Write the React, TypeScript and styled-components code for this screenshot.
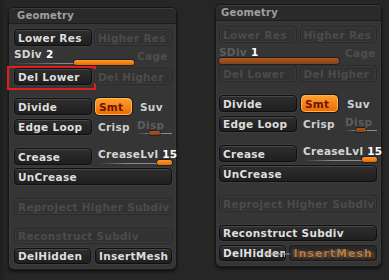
import React from 'react';
import styled, { createGlobalStyle, css } from 'styled-components';

const GlobalStyle = createGlobalStyle`
  html, body {
    margin: 0;
    background: #262626;
    font-family: "DejaVu Sans", "Liberation Sans", sans-serif;
  }
`;

type BtnKind = 'on' | 'off' | 'accent' | 'ghost';

const Stage = styled.div`
  display: flex;
  align-items: flex-start;
  gap: 38px;
  padding: 4px 0 0 8px;
  height: 280px;
  box-sizing: border-box;
  overflow: hidden;
  background: linear-gradient(90deg, #1e1e1e 0, #262626 6px);
`;

const Panel = styled.div<{ $drop: number; $width: number; $pad: number }>`
  margin-top: ${(p) => p.$drop}px;
  width: ${(p) => p.$width}px;
  height: 263px;
  box-sizing: border-box;
  background: #353535;
  border: 1px solid #171717;
  border-radius: 6px;
  box-shadow: 0 2px 3px rgba(0, 0, 0, 0.55), inset 0 0 0 1px #3a3a3a;
  display: flex;
  flex-direction: column;
  --pad: ${(p) => p.$pad}px;
`;

const Header = styled.div<{ $indent: number }>`
  height: 15px;
  flex: none;
  background: #2a2a2a;
  border-radius: 5px 5px 0 0;
  border-bottom: 1px solid #1d1d1d;
  box-shadow: inset 0 1px 0 #3c3c3c;
  padding-left: ${(p) => p.$indent}px;
  font-size: 10px;
  font-weight: bold;
  letter-spacing: 0.2px;
  line-height: 15px;
  color: #a0a0a0;
`;

const Body = styled.div`
  display: flex;
  flex-direction: column;
  gap: 13px;
  padding: 5px 4px 0 var(--pad);
`;

const Section = styled.div<{ $gap: number }>`
  display: flex;
  flex-direction: column;
  gap: ${(p) => p.$gap}px;
`;

const Pair = styled.div<{ $gap: number }>`
  display: grid;
  grid-template-columns: 1fr 1fr;
  gap: ${(p) => p.$gap}px;
`;

const Row = styled.div<{ $cols: string; $gap?: number }>`
  display: grid;
  grid-template-columns: ${(p) => p.$cols};
  column-gap: ${(p) => p.$gap ?? 0}px;
  align-items: center;
`;

const Btn = styled.div<{ $kind?: BtnKind; $h?: number }>`
  position: relative;
  height: ${(p) => p.$h ?? 17}px;
  box-sizing: border-box;
  border-radius: 4px;
  padding: 0 3px;
  display: flex;
  align-items: center;
  font-size: 10.5px;
  font-weight: bold;
  letter-spacing: 0.3px;
  white-space: nowrap;
  overflow: hidden;
  ${(p) =>
    p.$kind === 'off'
      ? css`
          background: #323232;
          border: 1px solid #2a2a2a;
          box-shadow: inset 0 0 0 1px #3b3b3b;
          color: #4b4b4b;
        `
      : p.$kind === 'accent'
      ? css`
          background: linear-gradient(#ff9d30, #ec6c00);
          border: 1px solid #ffb357;
          box-shadow: 0 0 0 1px #1a1a1a;
          color: #6a1300;
        `
      : p.$kind === 'ghost'
      ? css`
          overflow: visible;
          padding-left: 4px;
          background: rgba(30, 30, 30, 0.5);
          border: 1px solid rgba(15, 15, 15, 0.6);
          box-shadow: 0 0 0 1px rgba(70, 70, 70, 0.5);
          color: rgba(200, 140, 80, 0.8);
          letter-spacing: 1.3px;
          filter: blur(0.6px);
          text-shadow: 3px 1px 2px rgba(130, 75, 30, 0.9), -2px 0 2px rgba(90, 90, 90, 0.8);
          &::before {
            content: '';
            position: absolute;
            left: -26px;
            top: 7px;
            width: 26px;
            height: 2px;
            background: rgba(150, 150, 150, 0.5);
          }
        `
      : css`
          background: linear-gradient(#2e2e2e, #1f1f1f);
          border: 1px solid #0f0f0f;
          box-shadow: inset 0 1px 0 #474747, 0 0 0 1px #3d3d3d;
          color: #dedede;
        `}
`;

const Highlight = styled.div`
  position: relative;
  &::after {
    content: '';
    position: absolute;
    top: -2px;
    left: -7px;
    right: -4px;
    bottom: -5px;
    border: 2px solid #e0201c;
    pointer-events: none;
  }
`;

const Label = styled.span<{ $dim?: boolean; $indent?: number }>`
  padding-left: ${(p) => p.$indent ?? 0}px;
  font-size: 10.5px;
  font-weight: bold;
  letter-spacing: 0.3px;
  white-space: nowrap;
  color: ${(p) => (p.$dim ? '#4e4e4e' : '#cfcfcf')};
`;

const CageLabel = styled(Label)`
  align-self: center;
  padding-bottom: 2px;
`;

const Value = styled.span<{ $dim?: boolean }>`
  color: ${(p) => (p.$dim ? '#5a5a5a' : '#ffffff')};
`;

const SubRow = styled.div`
  display: grid;
  grid-template-columns: 120px 1fr;
  height: 22px;
`;

const Slider = styled.div<{ $indent?: number }>`
  display: flex;
  flex-direction: column;
  padding-left: ${(p) => p.$indent ?? 0}px;
  min-width: 0;
`;

const SliderText = styled.div<{ $dim?: boolean; $top: number }>`
  padding-top: ${(p) => p.$top}px;
  height: 12px;
  line-height: 12px;
  font-size: 10.5px;
  font-weight: bold;
  letter-spacing: 0.3px;
  white-space: nowrap;
  color: ${(p) => (p.$dim ? '#5c5c5c' : '#d6d6d6')};
`;

const Track = styled.div<{ $h: number }>`
  position: relative;
  height: ${(p) => p.$h}px;
  &::before {
    content: '';
    position: absolute;
    left: 0;
    right: 0;
    top: 50%;
    height: 1px;
    background: linear-gradient(90deg, rgba(120, 120, 120, 0), #8a8a8a 40%, #8a8a8a);
  }
`;

const Thumb = styled.div<{ $muted?: boolean }>`
  position: absolute;
  top: 0;
  bottom: 0;
  border-radius: 3px;
  background: ${(p) =>
    p.$muted ? 'linear-gradient(#a9581f, #86431a)' : 'linear-gradient(#ff9a2a, #e66a00)'};
  box-shadow: 0 0 0 1px rgba(0, 0, 0, 0.35);
`;

interface SliderProps {
  text: string;
  value: string;
  max: number;
  current: number;
  muted?: boolean;
  dimText?: boolean;
  top: number;
  trackH: number;
  indent?: number;
  thumbW?: number;
}

const SliderField: React.FC<SliderProps> = ({
  text,
  value,
  max,
  current,
  muted,
  dimText,
  top,
  trackH,
  indent,
  thumbW,
}) => {
  // thumb is one step wide unless a fixed width is given
  const w = thumbW ? `${thumbW}px` : `${100 / max}%`;
  const left = thumbW
    ? `calc(${(current / max) * 100}% - ${thumbW}px)`
    : `${((current - 1) / max) * 100}%`;
  return (
    <Slider $indent={indent}>
      <SliderText $dim={dimText} $top={top}>
        {text}
        {value && (
          <>
            {' '}
            <Value>{value}</Value>
          </>
        )}
      </SliderText>
      <Track $h={trackH}>
        <Thumb $muted={muted} style={{ left, width: w }} />
      </Track>
    </Slider>
  );
};

interface GeoProps {
  variant: 'before' | 'after';
}

const GeometryPanel: React.FC<GeoProps> = ({ variant }) => {
  const after = variant === 'after';
  const gap = after ? 3 : 2;
  return (
    <Panel $drop={after ? 0 : 3} $width={after ? 167 : 169} $pad={after ? 3 : 5}>
      <Header $indent={after ? 5 : 8}>Geometry</Header>
      <Body>
        <Section $gap={0}>
          <Pair $gap={gap}>
            <Btn $kind={after ? 'off' : 'on'}>Lower Res</Btn>
            <Btn $kind="off">Higher Res</Btn>
          </Pair>
          <SubRow>
            {after ? (
              <SliderField
                text="SDiv"
                value="1"
                max={1}
                current={1}
                muted
                dimText
                top={3}
                trackH={6}
              />
            ) : (
              <SliderField text="SDiv" value="2" max={2} current={2} top={2} trackH={5} />
            )}
            <CageLabel $dim $indent={after ? 6 : 3}>
              Cage
            </CageLabel>
          </SubRow>
          <Pair $gap={gap}>
            {after ? (
              <Btn $kind="off">Del Lower</Btn>
            ) : (
              <Highlight>
                <Btn>Del Lower</Btn>
              </Highlight>
            )}
            <Btn $kind="off">Del Higher</Btn>
          </Pair>
        </Section>

        <Section $gap={4}>
          <Row $cols="78px 37px 1fr" $gap={gap + 1}>
            <Btn>Divide</Btn>
            <Btn $kind="accent">Smt</Btn>
            <Label $indent={5}>Suv</Label>
          </Row>
          <Row $cols={after ? '78px 45px 1fr' : '78px 42px 1fr'}>
            <Btn $h={16}>Edge Loop</Btn>
            <Label $indent={6}>Crisp</Label>
            <SliderField
              text="Disp"
              value=""
              max={3}
              current={2}
              muted
              dimText
              top={0}
              trackH={4}
              indent={3}
            />
          </Row>
        </Section>

        <Section $gap={3}>
          <Row $cols="78px 1fr">
            <Btn>Crease</Btn>
            <SliderField
              text="CreaseLvl"
              value="15"
              max={15}
              current={15}
              top={0}
              trackH={5}
              indent={6}
              thumbW={15}
            />
          </Row>
          <Btn>UnCrease</Btn>
        </Section>

        <Btn $kind="off">Reproject Higher Subdiv</Btn>

        <Section $gap={4}>
          <Btn $kind={after ? 'on' : 'off'} $h={16}>
            Reconstruct Subdiv
          </Btn>
          <Pair $gap={after ? 3 : 4}>
            <Btn $h={16}>DelHidden</Btn>
            <Btn $h={16} $kind={after ? 'ghost' : 'on'}>
              InsertMesh
            </Btn>
          </Pair>
        </Section>
      </Body>
    </Panel>
  );
};

export default function App() {
  return (
    <>
      <GlobalStyle />
      <Stage>
        <GeometryPanel variant="before" />
        <GeometryPanel variant="after" />
      </Stage>
    </>
  );
}
